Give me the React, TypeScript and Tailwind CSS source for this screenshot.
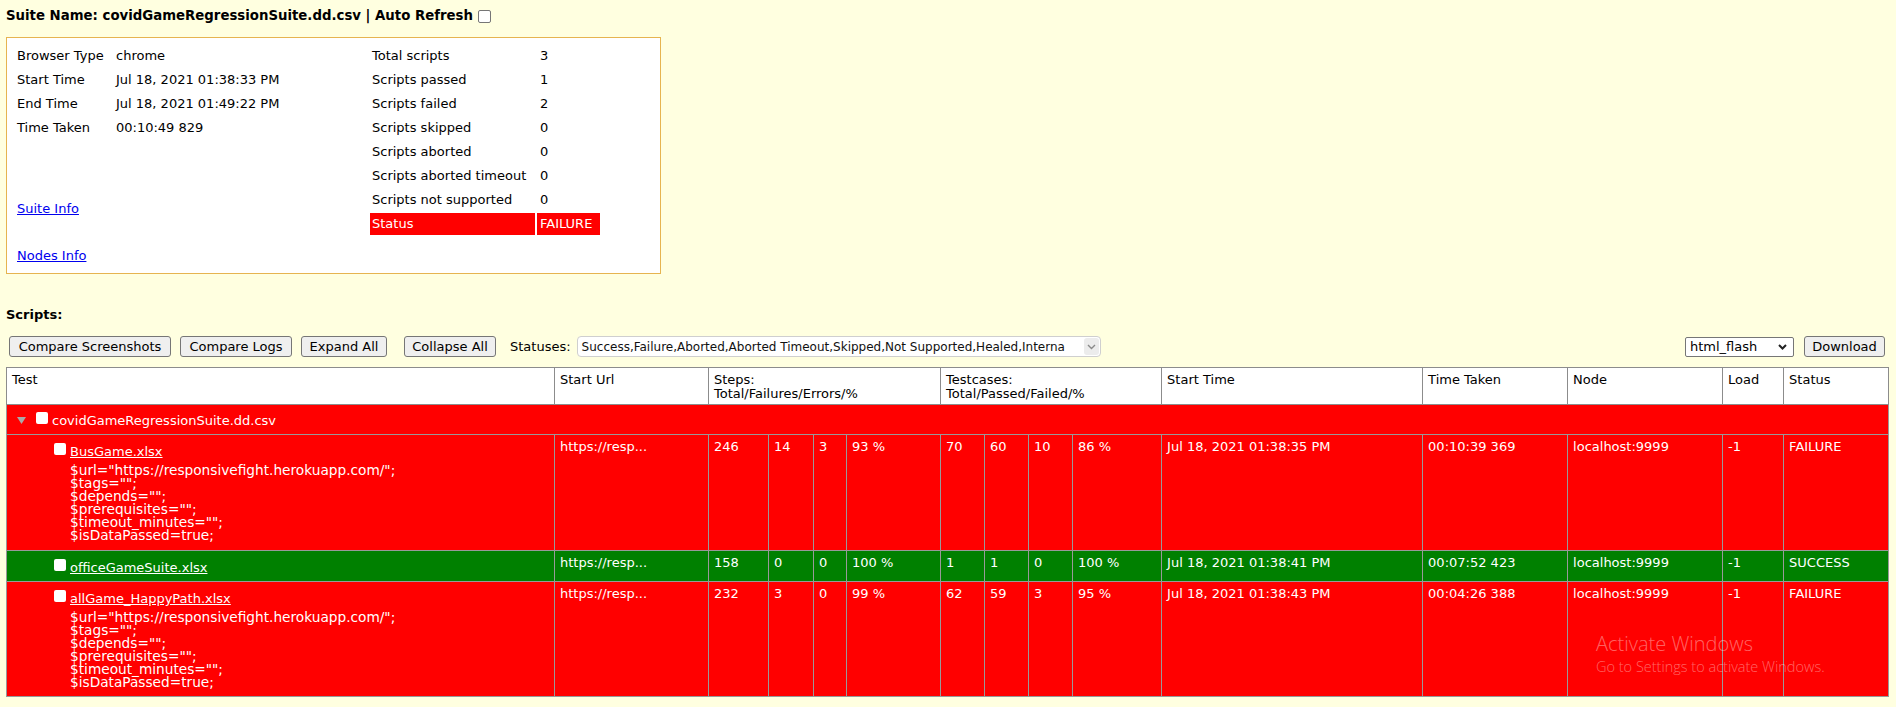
import React from 'react';

const leftInfo: [string, string][] = [
    ['Browser Type', 'chrome'],
    ['Start Time', 'Jul 18, 2021 01:38:33 PM'],
    ['End Time', 'Jul 18, 2021 01:49:22 PM'],
    ['Time Taken', '00:10:49 829'],
];

const stats: [string, string][] = [
    ['Total scripts', '3'],
    ['Scripts passed', '1'],
    ['Scripts failed', '2'],
    ['Scripts skipped', '0'],
    ['Scripts aborted', '0'],
    ['Scripts aborted timeout', '0'],
    ['Scripts not supported', '0'],
];

const params = [
    '$url="https://responsivefight.herokuapp.com/";',
    '$tags="";',
    '$depends="";',
    '$prerequisites="";',
    '$timeout_minutes="";',
    '$isDataPassed=true;',
];

interface ScriptRow {
    name: string;
    ok: boolean;
    cells: string[];
    height: string;
}

const rows: ScriptRow[] = [
    {
        name: 'BusGame.xlsx',
        ok: false,
        height: 'h-[116px]',
        cells: ['https://resp...', '246', '14', '3', '93 %', '70', '60', '10', '86 %', 'Jul 18, 2021 01:38:35 PM', '00:10:39 369', 'localhost:9999', '-1', 'FAILURE'],
    },
    {
        name: 'officeGameSuite.xlsx',
        ok: true,
        height: 'h-[31px]',
        cells: ['https://resp...', '158', '0', '0', '100 %', '1', '1', '0', '100 %', 'Jul 18, 2021 01:38:41 PM', '00:07:52 423', 'localhost:9999', '-1', 'SUCCESS'],
    },
    {
        name: 'allGame_HappyPath.xlsx',
        ok: false,
        height: 'h-[115px]',
        cells: ['https://resp...', '232', '3', '0', '99 %', '62', '59', '3', '95 %', 'Jul 18, 2021 01:38:43 PM', '00:04:26 388', 'localhost:9999', '-1', 'FAILURE'],
    },
];

const colWidths = ['w-[548px]', 'w-[154px]', 'w-[60px]', 'w-[45px]', 'w-[33px]', 'w-[94px]', 'w-[44px]', 'w-[44px]', 'w-[44px]', 'w-[89px]', 'w-[261px]', 'w-[145px]', 'w-[155px]', 'w-[61px]', 'w-[105px]'];

const Box = () => <span className="inline-block w-[12px] h-[12px] bg-white rounded-[2px] shrink-0" />;

const Button = ({ label, className }: { label: string; className: string }) => (
    <button className={`h-[21px] border border-[#767676] bg-[#efefef] rounded-[3px] text-[13px] text-black flex items-center justify-center ${className}`}>
        {label}
    </button>
);

export default function App() {
    return (
        <div className="relative min-h-[707px] bg-[#ffffe0] pl-[6px] pt-[8px] text-[13px] text-black font-['DejaVu_Sans',Verdana,sans-serif]">
            {/* Title */}
            <div className="flex items-center h-[16px]">
                <span className="font-bold text-[13.3px] leading-[16px]">Suite Name: covidGameRegressionSuite.dd.csv | Auto Refresh</span>
                <span className="ml-[5px] w-[13px] h-[13px] border border-[#767676] rounded-[2px] bg-white" />
            </div>

            {/* Summary box */}
            <div className="mt-[13px] w-[655px] h-[237px] border border-[#e6b450] bg-white flex pl-[10px]">
                <div className="w-[353px] pt-[7px] flex flex-col">
                    <div className="grid grid-cols-[99px_1fr] auto-rows-[22px] gap-y-[2px] items-center">
                        {leftInfo.map(([k, v]) => (
                            <React.Fragment key={k}>
                                <span>{k}</span>
                                <span>{v}</span>
                            </React.Fragment>
                        ))}
                    </div>
                    <a className="mt-[59px] h-[22px] flex items-center text-[#0000ee] underline w-fit">Suite Info</a>
                    <a className="mt-[25px] h-[22px] flex items-center text-[#0000ee] underline w-fit">Nodes Info</a>
                </div>
                <div className="pt-[7px] grid grid-cols-[165px_63px] auto-rows-[22px] gap-[2px] content-start">
                    {stats.map(([k, v]) => (
                        <React.Fragment key={k}>
                            <span className="pl-[2px] flex items-center">{k}</span>
                            <span className="pl-[3px] flex items-center">{v}</span>
                        </React.Fragment>
                    ))}
                    <span className="pl-[2px] flex items-center bg-[#ff0000] text-white">Status</span>
                    <span className="pl-[3px] flex items-center bg-[#ff0000] text-white">FAILURE</span>
                </div>
            </div>

            <div className="mt-[33px] h-[16px] font-bold leading-[16px]">Scripts:</div>

            {/* Toolbar */}
            <div className="mt-[13px] w-[1882px] h-[21px] pr-[3px] flex items-center justify-between">
                <div className="flex items-center">
                    <Button label="Compare Screenshots" className="ml-[3px] w-[162px]" />
                    <Button label="Compare Logs" className="ml-[9px] w-[112px]" />
                    <Button label="Expand All" className="ml-[9px] w-[86px]" />
                    <Button label="Collapse All" className="ml-[17px] w-[92px]" />
                    <span className="ml-[14px]">Statuses:</span>
                    <div className="ml-[6px] w-[524px] h-[21px] border border-[#cfcfcf] rounded-[4px] bg-white flex items-center">
                        <span className="flex-1 pl-[4px] overflow-hidden whitespace-nowrap text-[12px] text-[#111]">
                            Success,Failure,Aborted,Aborted Timeout,Skipped,Not Supported,Healed,Interna
                        </span>
                        <span className="mr-[1px] w-[15px] h-[17px] rounded-[3px] bg-[#ececec] flex items-center justify-center">
                            <svg width="9" height="6" viewBox="0 0 9 6" fill="none" stroke="#8a8a8a" strokeWidth="1.4">
                                <polyline points="1,1 4.5,4.5 8,1" />
                            </svg>
                        </span>
                    </div>
                </div>
                <div className="flex items-center">
                    <div className="w-[109px] h-[20px] border border-[#767676] rounded-[2px] bg-white flex items-center justify-between pl-[4px] pr-[6px]">
                        <span>html_flash</span>
                        <svg width="9" height="6" viewBox="0 0 9 6" fill="none" stroke="#222" strokeWidth="2">
                            <polyline points="1,1 4.5,4.5 8,1" />
                        </svg>
                    </div>
                    <Button label="Download" className="ml-[10px] w-[81px]" />
                </div>
            </div>

            {/* Scripts table */}
            <table className="mt-[10px] w-[1882px] table-fixed border-collapse border border-[#888]">
                <colgroup>
                    {colWidths.map((w, i) => (
                        <col key={i} className={w} />
                    ))}
                </colgroup>
                <thead>
                    <tr className="h-[37px] bg-white align-top">
                        {[
                            { t: 'Test', span: 1 },
                            { t: 'Start Url', span: 1 },
                            { t: 'Steps:\nTotal/Failures/Errors/%', span: 4 },
                            { t: 'Testcases:\nTotal/Passed/Failed/%', span: 4 },
                            { t: 'Start Time', span: 1 },
                            { t: 'Time Taken', span: 1 },
                            { t: 'Node', span: 1 },
                            { t: 'Load', span: 1 },
                            { t: 'Status', span: 1 },
                        ].map(h => (
                            <th key={h.t} colSpan={h.span} className="border border-[#8c8c8c] px-[5px] pt-[5px] font-normal text-left leading-[14px] whitespace-pre-line">
                                {h.t}
                            </th>
                        ))}
                    </tr>
                </thead>
                <tbody className="text-white">
                    <tr className="h-[30px] bg-[#ff0000]">
                        <td colSpan={15} className="border border-[#999] p-0">
                            <div className="flex items-center pl-[10px]">
                                <svg width="9" height="8" viewBox="0 0 9 8" className="mt-[3px]">
                                    <polygon points="0,0 9,0 4.5,7" fill="#a9a9a9" />
                                </svg>
                                <span className="ml-[10px]"><Box /></span>
                                <span className="ml-[4px] mt-[2px] leading-[16px]">covidGameRegressionSuite.dd.csv</span>
                            </div>
                        </td>
                    </tr>
                    {rows.map(r => (
                        <tr key={r.name} className={`${r.height} align-top ${r.ok ? 'bg-[#008000]' : 'bg-[#ff0000]'}`}>
                            <td className="border border-[#999] pl-[47px] pt-[6px]">
                                <div className="flex items-start">
                                    <span className="mt-[2px] flex"><Box /></span>
                                    <a className="ml-[4px] mt-[3px] leading-[16px] underline">{r.name}</a>
                                </div>
                                {!r.ok && (
                                    <div className="mt-[4px] ml-[16px] text-[13.7px] leading-[13px]">
                                        {params.map(p => (
                                            <div key={p}>{p}</div>
                                        ))}
                                    </div>
                                )}
                            </td>
                            {r.cells.map((c, i) => (
                                <td key={i} className="border border-[#999] px-[5px] pt-[4px] leading-[16px] whitespace-nowrap overflow-hidden">
                                    {c}
                                </td>
                            ))}
                        </tr>
                    ))}
                </tbody>
            </table>

            {/* Windows activation watermark */}
            <div className="absolute left-[1596px] top-[630px] text-white/40 font-['Open_Sans',sans-serif] font-light pointer-events-none">
                <div className="text-[20px] leading-[28px]">Activate Windows</div>
                <div className="text-[14.5px] leading-[18px]">Go to Settings to activate Windows.</div>
            </div>
        </div>
    );
}
